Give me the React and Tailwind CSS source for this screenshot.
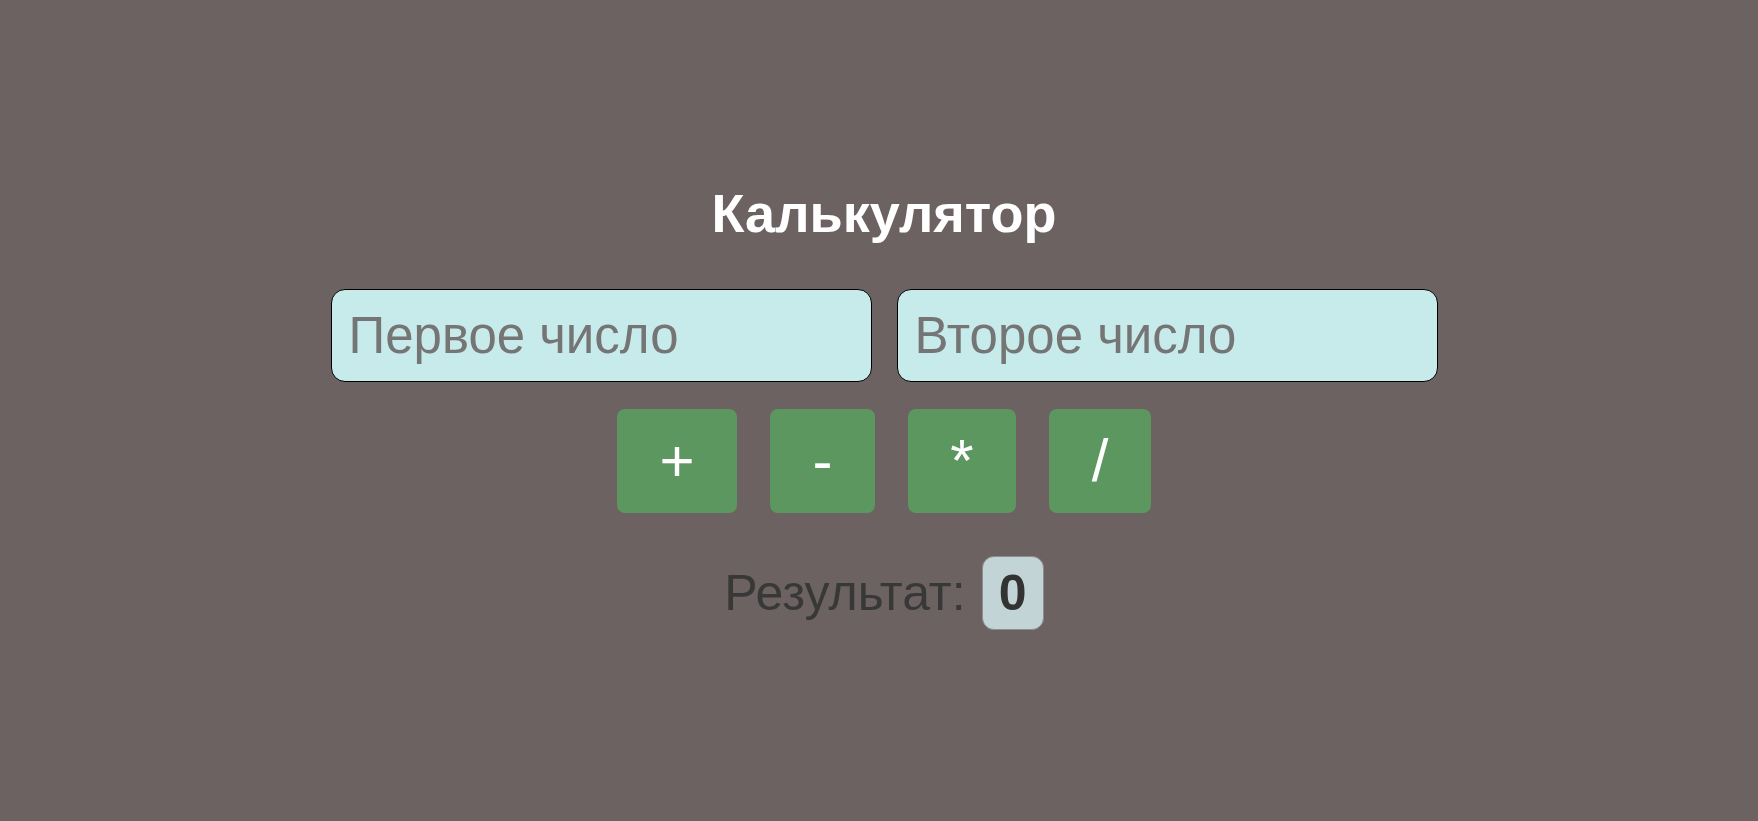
export default function App() {
  const ops = [
    { s: "+", w: "w-[120px]" },
    { s: "-", w: "w-[105px]" },
    { s: "*", w: "w-[108px]" },
    { s: "/", w: "w-[102px]" },
  ];
  return (
    <div
      className="min-h-[821px] w-full bg-[#6b6261] flex flex-col items-center pl-[10px]"
      style={{ fontFamily: '"Liberation Sans", Arial, sans-serif' }}
    >
      <h1 className="mt-[186px] text-[54px] leading-none font-bold text-white">Калькулятор</h1>
      <div className="mt-[49px] flex gap-[25px]">
        <input
          type="text"
          placeholder="Первое число"
          className="w-[541px] h-[93px] border border-black rounded-[14px] bg-[#c6ebea] pl-[17px] text-[51px] text-[#333] placeholder:text-[#757575] outline-none"
        />
        <input
          type="text"
          placeholder="Второе число"
          className="w-[541px] h-[93px] border border-black rounded-[14px] bg-[#c6ebea] pl-[17px] text-[51px] text-[#333] placeholder:text-[#757575] outline-none"
        />
      </div>
      <div className="mt-[27px] flex gap-[33px]">
        {ops.map((o) => (
          <button
            key={o.s}
            className={`${o.w} h-[104px] rounded-[8px] bg-[#5b975e] text-white text-[60px] leading-none flex items-center justify-center`}
          >
            {o.s}
          </button>
        ))}
      </div>
      <div className="mt-[43px] flex items-center">
        <span className="text-[50px] leading-none text-[#383838]">Результат:</span>
        <span className="ml-[16px] w-[62px] h-[74px] rounded-[12px] border border-[#8e8e8e] bg-[#c2d4d6] flex items-center justify-center text-[50px] leading-none font-bold text-[#333]">
          0
        </span>
      </div>
    </div>
  );
}
